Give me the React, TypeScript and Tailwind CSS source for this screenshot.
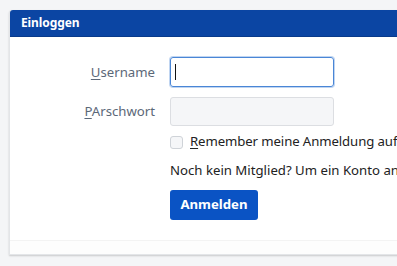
import React from "react";

export default function App() {
  return (
    <div
      className="w-[397px] h-[266px] overflow-hidden bg-[#f4f5f7] pt-[10px] pl-[9px]"
      style={{ fontFamily: '"Noto Sans", "Open Sans", sans-serif' }}
    >
      <div className="w-[400px] bg-white rounded-t-[3px] shadow-[0_1px_2px_rgba(0,0,0,0.18)] border border-[#e3e5e8] border-t-0">
        <div className="h-[27px] bg-[#0b45a3] rounded-t-[3px] border-b border-[#093a8a] flex items-center pl-[11px]">
          <span className="text-white font-bold text-[12px] tracking-[-0.1px]">Einloggen</span>
        </div>
        <div className="pt-[20px]">
          <div className="flex items-center">
            <label className="w-[145px] shrink-0 text-right text-[13.2px] text-[#5c6878] pt-[2px]">
              <span className="underline underline-offset-2">U</span>sername
            </label>
            <div className="ml-[15px] shrink-0 w-[164px] h-[30px] rounded-[3px] border border-[#4a86d6] shadow-[0_0_0_1px_rgba(74,134,214,0.35)] flex items-center pl-[4px]">
              <div className="w-[1px] h-[16px] bg-[#111]" />
            </div>
          </div>
          <div className="flex items-center mt-[10px]">
            <label className="w-[145px] shrink-0 text-right text-[13.2px] text-[#5c6878] pt-[1px]">
              <span className="underline underline-offset-2">P</span>Arschwort
            </label>
            <div className="ml-[15px] shrink-0 w-[164px] h-[29px] rounded-[3px] border border-[#dcdee2] bg-[#f5f6f8]" />
          </div>
          <div className="flex items-center ml-[160px] mt-[10px] h-[12px]">
            <div className="w-[13px] h-[13px] shrink-0 rounded-[3px] border border-[#cfd3d8] bg-[#f5f6f8]" />
            <span className="ml-[7px] text-[13.2px] text-[#222] whitespace-nowrap tracking-[-0.1px]">
              <span className="underline underline-offset-2">R</span>emember meine Anmeldung auf diesem Computer
            </span>
          </div>
          <div className="ml-[160px] mt-[13px] text-[13.2px] text-[#222] whitespace-nowrap leading-[18px]">
            Noch kein Mitglied? Um ein Konto anzulegen, registrieren Sie sich.
          </div>
          <div className="ml-[160px] mt-[11px]">
            <button className="w-[88px] h-[30px] rounded-[3px] bg-[#0a53c4] text-white font-bold text-[13.2px]">
              Anmelden
            </button>
          </div>
          <div className="mt-[20px] h-[14px] bg-[#fdfdfd] border-t border-[#f3f3f3]" />
        </div>
      </div>
    </div>
  );
}
